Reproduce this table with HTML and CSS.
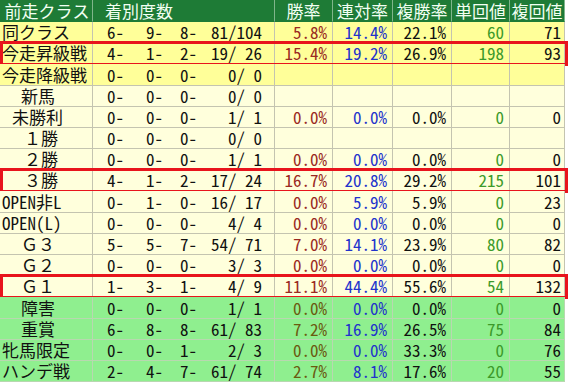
FILE: index.html
```html
<!DOCTYPE html>
<html lang="ja">
<head>
<meta charset="utf-8">
<link rel="stylesheet" href="styles.css">
</head>
<body>
<div class="tbl">
  <div class="row head">
    <div class="c name">前走クラス</div>
    <div class="c rec">着別度数</div>
    <div class="c">勝率</div>
    <div class="c">連対率</div>
    <div class="c">複勝率</div>
    <div class="c">単回値</div>
    <div class="c">複回値</div>
  </div>

  <div class="row yel">
    <div class="c name">同クラス</div>
    <div class="c rec"><span class="f1">6-</span><span class="f2">9-</span><span class="f3">8-</span><span class="f4">81/104</span></div>
    <div class="c win">5.8%</div><div class="c ren">14.4%</div><div class="c fuku">22.1%</div><div class="c tan">60</div><div class="c fk">71</div>
  </div>
  <div class="row yel hl">
    <div class="c name">今走昇級戦</div>
    <div class="c rec"><span class="f1">4-</span><span class="f2">1-</span><span class="f3">2-</span><span class="f4">19/ 26</span></div>
    <div class="c win">15.4%</div><div class="c ren">19.2%</div><div class="c fuku">26.9%</div><div class="c tan">198</div><div class="c fk">93</div>
  </div>
  <div class="row yel tall">
    <div class="c name">今走降級戦</div>
    <div class="c rec"><span class="f1">0-</span><span class="f2">0-</span><span class="f3">0-</span><span class="f4">0/ 0</span></div>
    <div class="c win"></div><div class="c ren"></div><div class="c fuku"></div><div class="c tan"></div><div class="c fk"></div>
  </div>

  <div class="row crm">
    <div class="c name ind2">新馬</div>
    <div class="c rec"><span class="f1">0-</span><span class="f2">0-</span><span class="f3">0-</span><span class="f4">0/ 0</span></div>
    <div class="c win"></div><div class="c ren"></div><div class="c fuku"></div><div class="c tan"></div><div class="c fk"></div>
  </div>
  <div class="row crm">
    <div class="c name ind1">未勝利</div>
    <div class="c rec"><span class="f1">0-</span><span class="f2">0-</span><span class="f3">0-</span><span class="f4">1/ 1</span></div>
    <div class="c win">0.0%</div><div class="c ren">0.0%</div><div class="c fuku">0.0%</div><div class="c tan">0</div><div class="c fk">0</div>
  </div>
  <div class="row crm">
    <div class="c name ind3">１勝</div>
    <div class="c rec"><span class="f1">0-</span><span class="f2">0-</span><span class="f3">0-</span><span class="f4">0/ 0</span></div>
    <div class="c win"></div><div class="c ren"></div><div class="c fuku"></div><div class="c tan"></div><div class="c fk"></div>
  </div>
  <div class="row crm">
    <div class="c name ind3">２勝</div>
    <div class="c rec"><span class="f1">0-</span><span class="f2">0-</span><span class="f3">0-</span><span class="f4">1/ 1</span></div>
    <div class="c win">0.0%</div><div class="c ren">0.0%</div><div class="c fuku">0.0%</div><div class="c tan">0</div><div class="c fk">0</div>
  </div>
  <div class="row crm hl">
    <div class="c name ind3">３勝</div>
    <div class="c rec"><span class="f1">4-</span><span class="f2">1-</span><span class="f3">2-</span><span class="f4">17/ 24</span></div>
    <div class="c win">16.7%</div><div class="c ren">20.8%</div><div class="c fuku">29.2%</div><div class="c tan">215</div><div class="c fk">101</div>
  </div>
  <div class="row crm tall">
    <div class="c name">OPEN非L</div>
    <div class="c rec"><span class="f1">0-</span><span class="f2">1-</span><span class="f3">0-</span><span class="f4">16/ 17</span></div>
    <div class="c win">0.0%</div><div class="c ren">5.9%</div><div class="c fuku">5.9%</div><div class="c tan">0</div><div class="c fk">23</div>
  </div>
  <div class="row crm">
    <div class="c name">OPEN(L)</div>
    <div class="c rec"><span class="f1">0-</span><span class="f2">0-</span><span class="f3">0-</span><span class="f4">4/ 4</span></div>
    <div class="c win">0.0%</div><div class="c ren">0.0%</div><div class="c fuku">0.0%</div><div class="c tan">0</div><div class="c fk">0</div>
  </div>
  <div class="row crm">
    <div class="c name ind2">Ｇ３</div>
    <div class="c rec"><span class="f1">5-</span><span class="f2">5-</span><span class="f3">7-</span><span class="f4">54/ 71</span></div>
    <div class="c win">7.0%</div><div class="c ren">14.1%</div><div class="c fuku">23.9%</div><div class="c tan">80</div><div class="c fk">82</div>
  </div>
  <div class="row crm">
    <div class="c name ind2">Ｇ２</div>
    <div class="c rec"><span class="f1">0-</span><span class="f2">0-</span><span class="f3">0-</span><span class="f4">3/ 3</span></div>
    <div class="c win">0.0%</div><div class="c ren">0.0%</div><div class="c fuku">0.0%</div><div class="c tan">0</div><div class="c fk">0</div>
  </div>
  <div class="row crm hl">
    <div class="c name ind2">Ｇ１</div>
    <div class="c rec"><span class="f1">1-</span><span class="f2">3-</span><span class="f3">1-</span><span class="f4">4/ 9</span></div>
    <div class="c win">11.1%</div><div class="c ren">44.4%</div><div class="c fuku">55.6%</div><div class="c tan">54</div><div class="c fk">132</div>
  </div>

  <div class="row grn tall">
    <div class="c name ind2">障害</div>
    <div class="c rec"><span class="f1">0-</span><span class="f2">0-</span><span class="f3">0-</span><span class="f4">1/ 1</span></div>
    <div class="c win">0.0%</div><div class="c ren">0.0%</div><div class="c fuku">0.0%</div><div class="c tan">0</div><div class="c fk">0</div>
  </div>
  <div class="row grn">
    <div class="c name ind2">重賞</div>
    <div class="c rec"><span class="f1">6-</span><span class="f2">8-</span><span class="f3">8-</span><span class="f4">61/ 83</span></div>
    <div class="c win">7.2%</div><div class="c ren">16.9%</div><div class="c fuku">26.5%</div><div class="c tan">75</div><div class="c fk">84</div>
  </div>
  <div class="row grn">
    <div class="c name">牝馬限定</div>
    <div class="c rec"><span class="f1">0-</span><span class="f2">0-</span><span class="f3">1-</span><span class="f4">2/ 3</span></div>
    <div class="c win">0.0%</div><div class="c ren">0.0%</div><div class="c fuku">33.3%</div><div class="c tan">0</div><div class="c fk">76</div>
  </div>
  <div class="row grn">
    <div class="c name">ハンデ戦</div>
    <div class="c rec"><span class="f1">2-</span><span class="f2">4-</span><span class="f3">7-</span><span class="f4">61/ 74</span></div>
    <div class="c win">2.7%</div><div class="c ren">8.1%</div><div class="c fuku">17.6%</div><div class="c tan">20</div><div class="c fk">55</div>
  </div>
</div>
</body>
</html>
```
FILE: styles.css
```css
html, body {
  margin: 0;
  padding: 0;
  background: #ffffff;
}
body {
  width: 570px;
  height: 382px;
  font-family: "Noto Sans Mono CJK JP", "Noto Sans CJK JP", "DejaVu Sans Mono", monospace;
  font-size: 17px;
  color: #111;
}
.tbl {
  width: 565px;
  display: flex;
  flex-direction: column;
}
.row {
  display: grid;
  grid-template-columns: 93px 182px 58px 60px 59px 58px 55px;
  height: 21px;
  position: relative;
}
.row.tall { height: 22px; }
.head { height: 22px; background: #1e7b36; color: #f2fff2; }
.yel { background: #ffff99; }
.crm { background: #ffffdc; }
.grn { background: #8fef8f; }

.c {
  box-sizing: border-box;
  border-right: 1px solid #c4c4b0;
  border-bottom: 1px solid #c4c4b0;
  display: flex;
  align-items: center;
  justify-content: flex-end;
  padding-right: 5px;
  white-space: pre;
  line-height: 20px;
}
.grn .c { border-color: #b8d8b0; }
.head .c {
  justify-content: center;
  padding-right: 0;
  border-right-color: #7fb58b;
  border-bottom-color: #1e7b36;
}
.head .c.rec { justify-content: flex-start; padding-left: 12px; }
.name { justify-content: flex-start; padding-left: 2px; padding-right: 0; }
.ind1 { padding-left: 12px; }
.ind2 { padding-left: 21px; }
.ind3 { padding-left: 24px; }

.rec { justify-content: flex-start; padding: 0; }
.rec span { display: block; text-align: right; }
.f1 { width: 31px; }
.f2 { width: 39px; }
.f3 { width: 34px; }
.f4 { width: 65px; }

.win { color: #9a2a22; }
.grn .win { color: #6b5a10; }
.ren { color: #2233cc; }
.fuku { color: #111; }
.tan { color: #3c9a2a; }
.fk { padding-right: 3px; color: #111; }

.hl::after {
  content: "";
  position: absolute;
  left: 0;
  right: -3px;
  top: -2px;
  bottom: -2px;
  border: 3px solid #e8141c;
  pointer-events: none;
}
```
